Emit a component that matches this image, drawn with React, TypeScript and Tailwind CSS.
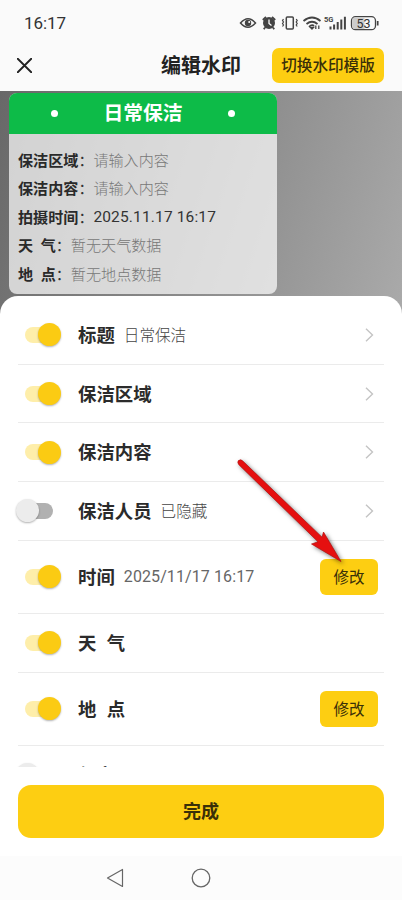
import React, { useState } from 'react'

interface IField {
    id: string;
    label: string;
    value?: string;
    enabled: boolean;
    action: "arrow" | "edit" | "none";
    height: string;
}

const fields: IField[] = [
    { id: "title", label: "标题", value: "日常保洁", enabled: true, action: "arrow", height: "h-[58.7px]" },
    { id: "area", label: "保洁区域", enabled: true, action: "arrow", height: "h-[58.7px]" },
    { id: "content", label: "保洁内容", enabled: true, action: "arrow", height: "h-[58.7px]" },
    { id: "staff", label: "保洁人员", value: "已隐藏", enabled: false, action: "arrow", height: "h-[58.7px]" },
    { id: "time", label: "时间", value: "2025/11/17 16:17", enabled: true, action: "edit", height: "h-[73.2px]" },
    { id: "weather", label: "天  气", enabled: true, action: "none", height: "h-[58.7px]" },
    { id: "place", label: "地  点", enabled: true, action: "edit", height: "h-[73.2px]" },
    { id: "guard", label: "保安", enabled: false, action: "none", height: "h-[58.7px]" },
];

const cardRows = [
    { label: "保洁区域", value: "请输入内容", filled: false },
    { label: "保洁内容", value: "请输入内容", filled: false },
    { label: "拍摄时间", value: "2025.11.17 16:17", filled: true },
    { label: "天  气", value: "暂无天气数据", filled: false },
    { label: "地  点", value: "暂无地点数据", filled: false },
];

function StatusBar() {
    return (
        <div className="flex h-[46px] items-center justify-between pl-[24px] pr-[22px] text-[#333]">
            <span className="mt-[2px] font-['Roboto'] text-[17px] tracking-[-0.05px]">16:17</span>
            <svg width="141" height="20" viewBox="0 0 141 20" fill="none" stroke="#444" strokeWidth="1.5">
                <path d="M1.5 10Q9 1.5 16.5 10Q9 18.5 1.5 10Z" />
                <circle cx="9" cy="10" r="3.2" fill="#444" stroke="none" />
                <circle cx="10.2" cy="9" r="1" fill="#fff" stroke="none" />
                <circle cx="30" cy="10" r="6" fill="#444" stroke="none" />
                <path d="M23.8 7L27 4M36.2 7L33 4M26 14.5L24.8 16.3M34 14.5L35.2 16.3" strokeWidth="1.8" />
                <path d="M30 6.5V10.5L32.5 12.5" stroke="#fff" strokeWidth="1.3" />
                <rect x="47.3" y="4" width="7" height="12" rx="1" />
                <path d="M44.5 6L43.5 7.5L44.5 9L43.5 10.5L44.5 12L43.5 13.5M57.2 6L58.2 7.5L57.2 9L58.2 10.5L57.2 12L58.2 13.5" strokeWidth="1.2" />
                <path d="M64.5 8Q73 1 81.5 8M67.5 11Q73 6.5 78.5 11M70 13.8Q73 11 75 13" strokeWidth="1.8" />
                <path d="M71.5 14.5L73 16L74.5 14.5ZM76.8 12.5V16M79.8 12.5V16" strokeWidth="1.3" />
                <text x="85" y="8.8" fill="#444" stroke="none" fontSize="8" fontWeight="700" fontFamily="Roboto, sans-serif" textLength="9.5" lengthAdjust="spacingAndGlyphs">5G</text>
                <path d="M91.5 13.5V16.5M95.1 11.5V16.5M98.7 9V16.5M102.3 6.5V16.5M105.9 3.8V16.5" strokeWidth="2" />
                <rect x="112.5" y="3.7" width="24" height="13" rx="4" fill="#fafafa" strokeWidth="1.3" />
                <path d="M116 4.4H125.5V16H116Q113.2 16 113.2 13V7.4Q113.2 4.4 116 4.4Z" fill="#ccc" stroke="none" />
                <path d="M138.7 8V12.5" strokeWidth="1.7" />
                <text x="124.5" y="14.6" textAnchor="middle" fill="#333" stroke="none" fontSize="12.5" fontFamily="Roboto, sans-serif">53</text>
            </svg>
        </div>
    )
}

function Header() {
    return (
        <div className="grid h-[45px] grid-cols-[1fr_auto_1fr] items-start px-[18px]">
            <button className="-ml-px mt-[12px] w-[15px]">
                <svg width="15" height="15" viewBox="0 0 14 14" fill="none" stroke="#222" strokeWidth="1.7" strokeLinecap="round">
                    <path d="M0.7 0.7L13.3 13.3M13.3 0.7L0.7 13.3" />
                </svg>
            </button>
            <div className="mt-[5px] text-[20px] font-bold leading-[28px] text-[#222]">编辑水印</div>
            <button className="mt-[2px] h-[35px] w-[112px] justify-self-end rounded-[7px] bg-[#fdce12] pb-px text-[15.6px] font-medium text-[#3a3008]">切换水印模版</button>
        </div>
    )
}

function WatermarkCard() {
    return (
        <div className="h-[201px] w-[268px] overflow-hidden rounded-[8px] bg-white/70">
            <div className="flex h-[41px] items-center justify-between bg-[#0dbb48] px-[42px]">
                <div className="h-[7px] w-[7px] rounded-full bg-white"></div>
                <div className="pb-[3px] text-[19.8px] font-bold leading-none text-white">日常保洁</div>
                <div className="h-[7px] w-[7px] rounded-full bg-white"></div>
            </div>
            <div className="px-[9px] pt-[11px]">
                {cardRows.map(row => (
                    <div key={row.label} className="flex h-[28.5px] items-center whitespace-pre text-[15.1px]">
                        <span className="font-bold text-[#2a2a2a] [word-spacing:0.4px]">{row.label}</span>
                        <span className="w-[15px] text-[#333]">：</span>
                        {row.filled
                            ? <span className="mt-[2px] font-['Roboto'] text-[15.5px] tracking-[0.15px] text-[#333]">{row.value}</span>
                            : <span className="font-light text-[#777]">{row.value}</span>}
                    </div>
                ))}
            </div>
        </div>
    )
}

function Toggle({ checked, onChange }: { checked: boolean, onChange: () => void }) {
    return (
        <button role="switch" aria-checked={checked} onClick={onChange} className={checked ? "flex h-6 w-[60px] items-center pl-[7px]" : "flex h-6 w-[60px] items-center"}>
            {checked ? (
                <>
                    <span className="h-[16px] w-[25px] rounded-full bg-[#feeeaa]"></span>
                    <span className="-ml-[12px] h-[23px] w-[23px] rounded-full bg-[#fbcb13] shadow-[0_1px_2px_rgba(0,0,0,0.3)]"></span>
                </>
            ) : (
                <>
                    <span className="z-10 -ml-[2px] h-[23px] w-[23px] shrink-0 rounded-full bg-[#ececec] shadow-[0_1px_2px_rgba(0,0,0,0.3)]"></span>
                    <span className="-ml-[11px] h-[16px] w-[25px] rounded-full bg-[#b1b1b1]"></span>
                </>
            )}
        </button>
    )
}

function RedArrow() {
    return (
        <svg className="pointer-events-none absolute left-[230px] top-[450px] z-20 drop-shadow-[2px_2px_2px_rgba(0,0,0,0.5)]" width="125" height="120" viewBox="0 0 125 120">
            <path d="M8.4 10.6Q10.8 8.8 12.8 11L92 87.2L93.5 82L111 111.5L81.5 94L88 91.8L8.6 14.4Q7.2 12.2 8.4 10.6Z" fill="#e51010" stroke="#b01010" strokeWidth="0.7" />
        </svg>
    )
}

export default function App() {
    const [items, setItems] = useState<IField[]>(fields);

    const onToggle = (id: string) => {
        setItems(prev => prev.map(item => item.id === id ? { ...item, enabled: !item.enabled } : item))
    }

    return (
        <div className="relative flex h-[900px] w-[402px] flex-col overflow-hidden bg-[#fafafa] font-['Noto_Sans_CJK_SC',sans-serif]">
            <StatusBar />
            <Header />
            <div className="h-[225px] shrink-0 bg-linear-[108deg] from-[#686868] to-[#aaa] pl-[9px] pt-[2px]">
                <WatermarkCard />
            </div>
            <div className="z-10 -mt-[20px] flex h-[560px] shrink-0 flex-col rounded-t-[18px] bg-white px-[18px] pt-[10px]">
                <div className="-mx-[6px] h-[461px] shrink-0 overflow-hidden px-[6px]">
                    {items.map(item => (
                        <div key={item.id} className={`flex items-center border-b border-[#ebebeb] ${item.height}`}>
                            <Toggle checked={item.enabled} onChange={() => onToggle(item.id)} />
                            <span className="whitespace-pre text-[18.4px] font-bold text-[#2b2b2b] [word-spacing:1px]">{item.label}</span>
                            {item.value && (
                                <span className={item.id === "time"
                                    ? "ml-[9px] mt-px font-['Roboto'] text-[16px] tracking-[0.1px] text-[#666]"
                                    : "ml-[9px] text-[15.6px] font-light text-[#444]"}>{item.value}</span>
                            )}
                            {item.action === "arrow" && (
                                <svg className="ml-auto mr-[10px]" width="9" height="14" viewBox="0 0 9 14" fill="none" stroke="#c4c4c4" strokeWidth="1.4">
                                    <path d="M1 0.7L7.5 7L1 13.3" />
                                </svg>
                            )}
                            {item.action === "edit" && (
                                <button className="ml-auto mr-[6px] h-[36px] w-[58px] rounded-[6px] bg-[#fdce12] text-[15.5px] text-[#3a3008]">修改</button>
                            )}
                        </div>
                    ))}
                </div>
                <button className="mt-[18px] h-[53px] shrink-0 rounded-[13px] bg-[#fdce12] pb-[2px] text-[18px] font-bold text-[#3a3008]">完成</button>
            </div>
            <div className="flex h-[44px] shrink-0 items-center bg-[#fcfcfc] pl-[106px]">
                <svg width="18" height="20" viewBox="0 0 18 20" fill="none" stroke="#666" strokeWidth="1.2" strokeLinejoin="round">
                    <path d="M1.5 10L16.5 1.5V18.5Z" />
                </svg>
                <svg className="ml-[67px]" width="20" height="20" viewBox="0 0 20 20" fill="none" stroke="#666" strokeWidth="1.3">
                    <circle cx="10" cy="10" r="8.8" />
                </svg>
            </div>
            <RedArrow />
        </div>
    )
}
